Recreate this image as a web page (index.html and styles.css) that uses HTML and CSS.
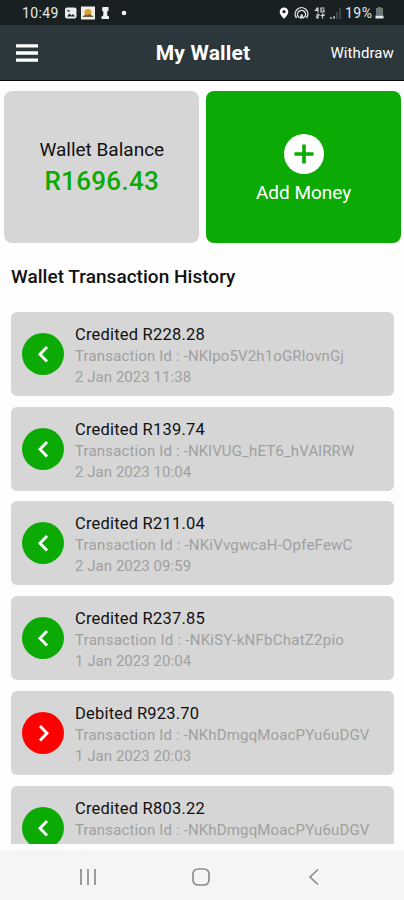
FILE: index.html
```html
<!DOCTYPE html>
<html lang="en">
<head>
<meta charset="utf-8">
<title>My Wallet</title>
<link rel="stylesheet" href="styles.css">
</head>
<body>
<div class="status">
  <span class="clock">10:49</span>
  <svg class="status-left" width="64" height="14" viewBox="0 0 64 14">
    <rect x="1" y="1.500" width="11.500" height="11" rx="2" fill="#e9eded"/>
    <path d="M3 10.500l2.500-3 2 2 1.500-1.500 2 2.500zM3.500 4h2v1.500h-2z" fill="#1a2224"/>
    <rect x="17" y="0.500" width="14" height="13" fill="#f1eee6"/>
    <circle cx="24" cy="6.500" r="3.600" fill="#dda02f"/>
    <path d="M18.500 10.500l3-2 2 .5 2-1 4 2.500v.5h-11z" fill="#6b5a45"/>
    <path d="M38.500 1h6v3.500l-1.300 1v4l1.800 1v2.500h-7.500v-2.500l1.800-1v-4l-1.300-1z" fill="#f0f3f3"/>
    <circle cx="60" cy="7" r="2.300" fill="#eef2f2"/>
  </svg>
  <svg class="status-right" width="66" height="14" viewBox="0 0 66 14">
    <path d="M6 1.500a4.300 4.300 0 0 0-4.300 4.300C1.700 9 6 12.800 6 12.800S10.300 9 10.300 5.800A4.300 4.300 0 0 0 6 1.500z" fill="#fff"/>
    <circle cx="6" cy="5.700" r="1.600" fill="#182022"/>
    <g fill="none" stroke="#dce1e1" stroke-width="1.400" stroke-linecap="round">
      <path d="M18.300 11.500a6.300 6.300 0 1 1 10.400 0M20.500 11a4 4 0 1 1 6 0"/>
      <path d="M23.500 8.500l-1.800 3.500h3.600z" fill="#dce1e1" stroke-width="1"/>
    </g>
    <g fill="none" stroke="#d5dada" stroke-width="1.200">
      <path d="M39.500 1.500l-2 3h3M40 1.500v5M46.500 2h-3.500v4h3V4h-1.500M40 7.500v5M38 10.500l2 2M38 9h4M44.500 12.500v-5M42.500 9.500h4M46 8v2"/>
    </g>
    <path d="M52 13v-2h2v2zM55 13v-3h2v3z" fill="#879092"/>
    <path d="M58 13V6h2v7zM61 13V2h2v11z" fill="#3c4648"/>
  </svg>
  <span class="percent">19%</span>
  <svg class="battery" width="9" height="12" viewBox="0 0 9 12">
    <path d="M3 0h3v1h2v7H1V1h2z" fill="#6d7778"/><path d="M0.500 8.500h8v3h-8z" fill="#e5e9e9"/>
  </svg>
</div>
<header class="bar">
  <svg class="menu" width="22" height="18" viewBox="0 0 22 18"><path d="M0 1.900h22M0 9h22M0 16.100h22" stroke="#fff" stroke-width="3.400"/></svg>
  <h1>My Wallet</h1>
  <span class="withdraw">Withdraw</span>
</header>
<section class="tiles">
  <div class="tile balance">
    <span class="label">Wallet Balance</span>
    <span class="amount">R1696.43</span>
  </div>
  <div class="tile add">
    <svg width="40" height="40" viewBox="0 0 40 40"><circle cx="20" cy="20" r="20" fill="#fff"/><path d="M10.500 20h19M20 10.500v19" stroke="#0caa04" stroke-width="3.600"/></svg>
    <span class="label">Add Money</span>
  </div>
</section>
<h2>Wallet Transaction History</h2>
<main class="list">
  <article class="row">
    <svg class="badge" viewBox="0 0 42 42"><circle cx="21" cy="21" r="21"/><path d="M25 14l-7 7.200 7 7.200"/></svg>
    <div class="info"><strong>Credited R228.28</strong><span class="tid a">Transaction Id : -NKlpo5V2h1oGRlovnGj</span><span class="date">2 Jan 2023 11:38</span></div>
  </article>
  <article class="row">
    <svg class="badge" viewBox="0 0 42 42"><circle cx="21" cy="21" r="21"/><path d="M25 14l-7 7.200 7 7.200"/></svg>
    <div class="info"><strong>Credited R139.74</strong><span class="tid a">Transaction Id : -NKlVUG_hET6_hVAlRRW</span><span class="date">2 Jan 2023 10:04</span></div>
  </article>
  <article class="row">
    <svg class="badge" viewBox="0 0 42 42"><circle cx="21" cy="21" r="21"/><path d="M25 14l-7 7.200 7 7.200"/></svg>
    <div class="info"><strong>Credited R211.04</strong><span class="tid c">Transaction Id : -NKiVvgwcaH-OpfeFewC</span><span class="date">2 Jan 2023 09:59</span></div>
  </article>
  <article class="row">
    <svg class="badge" viewBox="0 0 42 42"><circle cx="21" cy="21" r="21"/><path d="M25 14l-7 7.200 7 7.200"/></svg>
    <div class="info"><strong>Credited R237.85</strong><span class="tid d">Transaction Id : -NKiSY-kNFbChatZ2pio</span><span class="date">1 Jan 2023 20:04</span></div>
  </article>
  <article class="row">
    <svg class="badge debit" viewBox="0 0 42 42"><circle cx="21" cy="21" r="21"/><path d="M18 14l7 7.200-7 7.200"/></svg>
    <div class="info"><strong>Debited R923.70</strong><span class="tid a">Transaction Id : -NKhDmgqMoacPYu6uDGV</span><span class="date">1 Jan 2023 20:03</span></div>
  </article>
  <article class="row">
    <svg class="badge" viewBox="0 0 42 42"><circle cx="21" cy="21" r="21"/><path d="M25 14l-7 7.200 7 7.200"/></svg>
    <div class="info"><strong>Credited R803.22</strong><span class="tid a">Transaction Id : -NKhDmgqMoacPYu6uDGV</span></div>
  </article>
</main>
<nav class="nav">
  <svg width="18" height="18" viewBox="0 0 18 18"><path d="M2 1v16M9 1v16M16 1v16"/></svg>
  <svg width="18" height="18" viewBox="0 0 18 18"><rect x="1" y="1" width="16" height="16" rx="5"/></svg>
  <svg width="18" height="18" viewBox="0 0 18 18"><path d="M13 1.500L5 9l8 7.500"/></svg>
</nav>
</body>
</html>
```
FILE: styles.css
```css
* { box-sizing: border-box; }
body {
  margin: 0;
  width: 404px;
  height: 900px;
  overflow: hidden;
  display: flex;
  flex-direction: column;
  background: #fefefe;
  color: #111;
  font-family: Roboto, "Liberation Sans", sans-serif;
}
svg { display: block; flex: none; }
.status {
  height: 25px;
  flex: none;
  display: flex;
  align-items: center;
  padding: 1px 20px 0 22px;
  background: #182022;
  color: #e6eaea;
  font-size: 14px;
}
.clock { width: 42px; letter-spacing: 0.4px; }
.status-right { margin-left: auto; }
.percent { margin-left: 1px; width: 29px; letter-spacing: 0.5px; }
.battery { margin-left: 1px; }
.bar {
  height: 56px;
  flex: none;
  display: grid;
  grid-template-columns: 100px 1fr 100px;
  align-items: center;
  padding: 1px 10px 0 16px;
  background: #2b373b;
  border-bottom: 1px solid #080c0d;
  color: #fff;
}
h1 {
  margin: 0 4px 0 0;
  text-align: center;
  font-size: 21px;
  line-height: 24px;
  font-weight: 700;
  letter-spacing: 0.15px;
}
.withdraw { text-align: right; font-size: 15px; letter-spacing: 0.1px; white-space: nowrap; }
.tiles {
  display: grid;
  grid-template-columns: 1fr 1fr;
  gap: 7px;
  height: 152.500px;
  flex: none;
  margin: 9.500px 3px 0 4.400px;
}
.tile {
  border-radius: 8px;
  display: flex;
  flex-direction: column;
  align-items: center;
  justify-content: center;
}
.label { font-size: 19px; line-height: 24px; }
.balance { background: #d6d6d6; padding-top: 5px; }
.amount {
  color: #0caa04;
  font-size: 26px;
  line-height: 38px;
  font-weight: 500;
  letter-spacing: 0.3px;
}
.add { background: #0caa04; color: #fff; padding-top: 5px; }
.add .label { margin-top: 7px; }
h2 {
  margin: 22px 0 0 11px;
  height: 24px;
  font-size: 19px;
  line-height: 24px;
  font-weight: 500;
  letter-spacing: 0.03px;
}
.list {
  height: 532.500px;
  flex: none;
  overflow: hidden;
  margin-top: 22.700px;
  padding: 0 10px 0 11px;
  display: flex;
  flex-direction: column;
  gap: 10.9px;
}
.row {
  height: 84px;
  flex: none;
  display: flex;
  gap: 11px;
  padding: 11px 11px 0;
  border-radius: 6px;
  background: #d6d6d6;
}
.badge { width: 42px; height: 42px; margin-top: 10px; fill: #0caa04; }
.badge path { fill: none; stroke: #fff; stroke-width: 2.9; }
.debit { fill: #fe0000; }
.info {
  display: flex;
  flex-direction: column;
  padding-top: 1px;
  color: #a0a0a0;
  font-size: 15px;
  line-height: 21px;
  letter-spacing: 0.05px;
  white-space: nowrap;
}
.info strong {
  color: #111;
  font-size: 16.5px;
  line-height: 22px;
  font-weight: 400;
  letter-spacing: 0.2px;
}
.a { letter-spacing: 0.15px; }
.c { letter-spacing: 0.2px; }
.d { letter-spacing: 0.25px; }
.nav {
  height: 50px;
  flex: none;
  margin-top: auto;
  padding: 3px 81px 0 79px;
  display: flex;
  align-items: center;
  justify-content: space-between;
  background: #f5f5f5;
}
.nav svg { fill: none; stroke: #8c8c8c; stroke-width: 1.7; }
```
